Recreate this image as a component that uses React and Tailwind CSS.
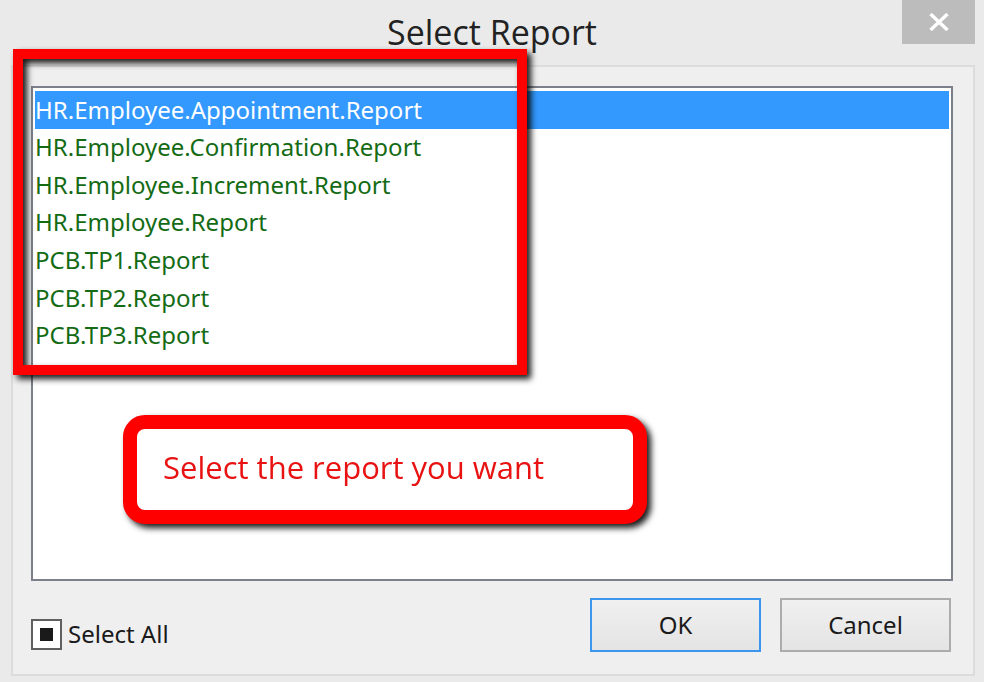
import { useEffect, useRef, useState } from "react";

const reports = [
  "HR.Employee.Appointment.Report",
  "HR.Employee.Confirmation.Report",
  "HR.Employee.Increment.Report",
  "HR.Employee.Report",
  "PCB.TP1.Report",
  "PCB.TP2.Report",
  "PCB.TP3.Report",
];

function TitleBar() {
  return (
    <header className="grid h-[65px] shrink-0 grid-cols-[1fr_auto_1fr] items-start">
      <h1 className="col-start-2 pt-2 font-['Open_Sans',sans-serif] text-[34px] leading-[48px] text-[#222]">
        Select Report
      </h1>
      <button
        type="button"
        aria-label="Close"
        className="mr-[9px] flex h-11 w-[73px] items-center justify-center justify-self-end bg-[#bcbcbc]"
      >
        <svg width="20" height="18" viewBox="0 0 20 18" fill="none" stroke="#fff" strokeWidth="3.4">
          <path d="M1.5 1 18.5 17M18.5 1 1.5 17" />
        </svg>
      </button>
    </header>
  );
}

function ReportList() {
  const [selected, setSelected] = useState(0);
  return (
    <div className="flex-1 border-2 border-[#7b808a] bg-white px-0.5 py-[3px]">
      <ul role="listbox" aria-label="Reports" className="grid h-[263px] grid-rows-7">
        {reports.map((name, i) => (
          <li
            key={name}
            role="option"
            aria-selected={i === selected}
            onClick={() => setSelected(i)}
            className="flex items-center text-[24px] leading-9 text-[#146b14] aria-selected:bg-[#3399ff] aria-selected:text-white"
          >
            {name}
          </li>
        ))}
      </ul>
    </div>
  );
}

function SelectAll() {
  const box = useRef(null);
  useEffect(() => {
    box.current.indeterminate = true;
  }, []);
  return (
    <label className="flex items-center gap-1.5 text-[24px] leading-9 text-[#1a1a1a]">
      <input
        ref={box}
        type="checkbox"
        className="grid size-[31px] appearance-none place-content-center border-2 border-[#606060] bg-white before:size-[13px] before:bg-[#1a1a1a] before:content-['']"
      />
      Select All
    </label>
  );
}

export default function App() {
  return (
    <div className="flex min-h-screen flex-col bg-[#eaeaea] font-['Noto_Sans',sans-serif]">
      <TitleBar />
      <main className="relative mr-[9px] mb-[6px] ml-[11px] flex flex-1 flex-col border-2 border-[#dcdcdc] bg-[#efefef] pt-[19px] pr-5 pl-[18px]">
        <ReportList />
        <footer className="flex h-[93px] shrink-0 items-start justify-between pt-[17px] pr-[2px]">
          <div className="pt-[18px]">
            <SelectAll />
          </div>
          <div className="flex gap-[19px] text-[24px] leading-9 text-[#1a1a1a]">
            <button
              type="button"
              className="h-[54px] w-[171px] border-2 border-[#3c96ee] bg-linear-to-b from-[#f0f0f0] to-[#e4e4e4]"
            >
              OK
            </button>
            <button
              type="button"
              className="h-[54px] w-[171px] border-2 border-[#acacac] bg-linear-to-b from-[#f0f0f0] to-[#e4e4e4]"
            >
              Cancel
            </button>
          </div>
        </footer>
        <div className="pointer-events-none absolute -top-[18px] left-0 h-[326px] w-[514px] border-10 border-[#ff0000] drop-shadow-[4px_4px_3px_rgba(0,0,0,0.9)]" />
        <p className="absolute top-[348px] left-[110px] h-[109px] w-[524px] rounded-[22px] border-14 border-[#ff0000] bg-white pt-5 pl-[26px] font-['Open_Sans',sans-serif] text-[31px] leading-9 text-[#e81212] drop-shadow-[4px_4px_3px_rgba(0,0,0,0.9)]">
          Select the report you want
        </p>
      </main>
    </div>
  );
}
